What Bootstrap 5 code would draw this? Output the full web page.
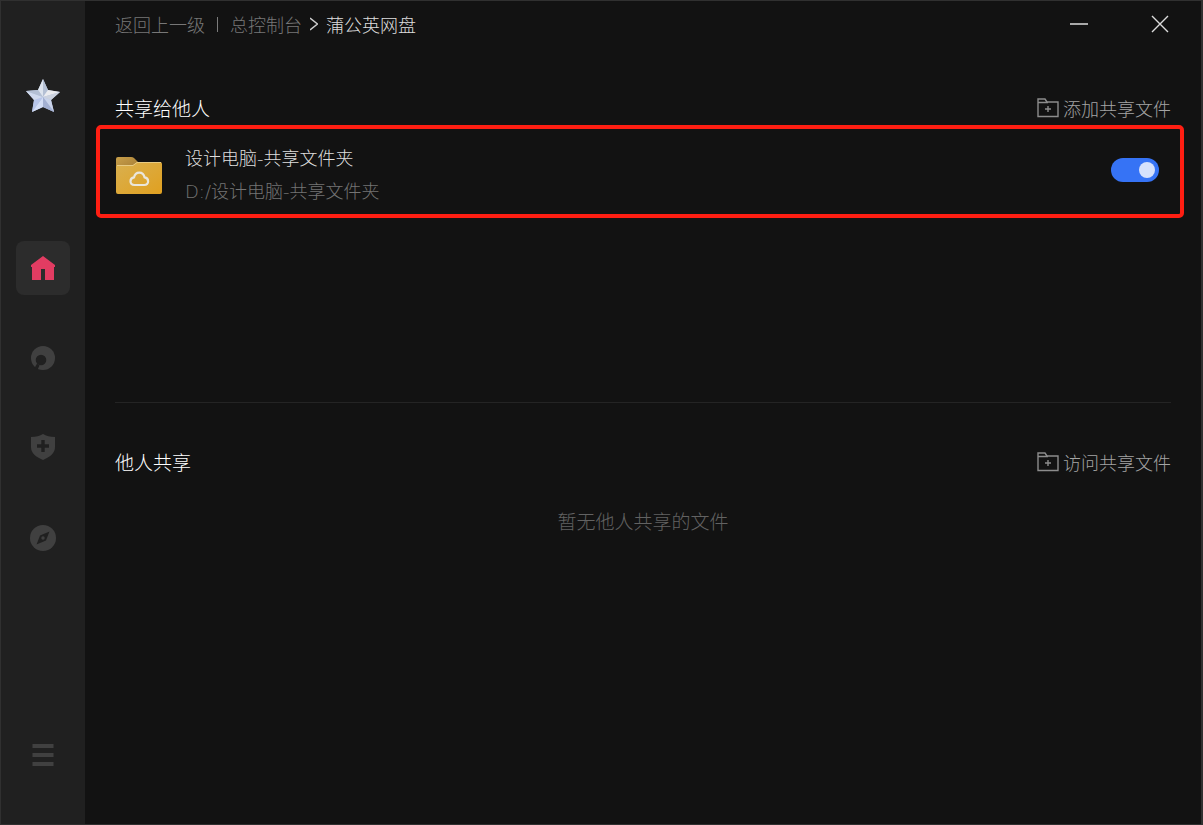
<!DOCTYPE html>
<html lang="zh-CN" data-bs-theme="dark">
<head>
<meta charset="utf-8">
<meta name="viewport" content="width=device-width, initial-scale=1">
<title>蒲公英网盘</title>
<link href="https://cdn.jsdelivr.net/npm/bootstrap@5.3.0/dist/css/bootstrap.min.css" rel="stylesheet">
<style>
body{background:#121212;color:#dedede;font-family:"Noto Sans CJK SC",sans-serif;font-weight:300;font-size:18px;line-height:26px}
.app-window{border:1px solid #303030;border-right-width:2px}
.side-rail{width:84px;background:#202020;padding:68px 0 42px}
.rail-links{gap:36px;margin-top:118px}
.rail-tile{width:54px;height:54px;border-radius:8px;color:#404040;background:none;border:0;padding:0}
.rail-tile.active{background:#2c2c2c;color:#e23c62}
.title-bar{height:46px;padding:0 30px;margin-bottom:44px}
.crumbs a{color:#777}
.crumb-rule{width:1px;height:15px;background:#7b7b7b;margin:0 12px}
.win-btns{gap:63px;margin-right:2px}
.win-btns button{background:none;border:0;padding:0;color:#dcdcdc;width:18px;height:20px}
.section-head{height:34px;padding:0 30px}
.section-head h2{font-size:19px;line-height:26px;font-weight:300;margin:0}
.head-btn{background:none;border:0;padding:0;gap:4px;color:#a4a4a4;font-weight:300}
.head-btn svg{color:#8c8c8c}
.share-list{min-height:277px}
.share-row{margin:0 17px 0 11px;border:4px solid #ff1e12;border-radius:5px;padding:13px 21px 6px 16px}
.share-folder{margin-top:14px}
.share-text{margin-left:23px;font-family:"DejaVu Sans","Noto Sans CJK SC",sans-serif}
.share-text label,.share-path{line-height:33px}
.share-path{color:#747474}
.share-switch .form-check-input{width:48px;height:24px;margin:0;border:0;background-color:#3673f5;background-size:24px 24px;
--bs-form-switch-bg:url("data:image/svg+xml,%3csvg xmlns='http://www.w3.org/2000/svg' viewBox='0 0 24 24'%3e%3ccircle cx='12' cy='12' r='8' fill='%23d6e1fc'/%3e%3c/svg%3e")!important}
.share-switch .form-check-input:not(:checked){background-color:#444}
.section-rule{height:1px;margin:0 30px 42px;border:0;background:#242424;opacity:1}
.empty-note{font-size:19px;color:#626262;margin:29px 0 0}
</style>
</head>
<body>
<div class="app-window d-flex min-vh-100">
  <nav class="side-rail d-flex flex-column align-items-center flex-shrink-0" aria-label="主导航">
    <a href="#" class="rail-tile d-flex align-items-center justify-content-center" aria-label="会员">
      <svg width="36" height="36" viewBox="0 0 36 36">
        <defs><linearGradient id="sg" x1="0" y1="0" x2="1" y2="1"><stop offset="0" stop-color="#c3cee0"/><stop offset="1" stop-color="#aebbdc"/></linearGradient></defs>
        <path d="M18 1l5 11 12 2-9 8 3 12-11-5-11 5 2-12-8-9 12-1z" fill="url(#sg)"/>
        <path d="M18 1v18l5-7z" fill="#b4c0d4"/><path d="M18 1v18l-5-7z" fill="#dde4ee"/>
        <path d="M35 14L18 19l5-7z" fill="#ebecef"/><path d="M35 14L18 19l8 3z" fill="#cbd2df"/>
        <path d="M29 34L18 19l8 3z" fill="#c9d3ea"/><path d="M29 34L18 19v10z" fill="#a3b0d2"/>
        <path d="M7 34l11-15v10z" fill="#d3ddf5"/><path d="M7 34l11-15-9 3z" fill="#b8c6ea"/>
        <path d="M1 13l17 6-9 3z" fill="#d0daee"/><path d="M1 13l17 6-5-7z" fill="#b4c0d4"/>
      </svg>
    </a>
    <div class="rail-links d-flex flex-column">
      <a href="#" class="rail-tile active d-flex align-items-center justify-content-center" aria-label="首页">
        <svg width="26" height="26" viewBox="0 0 26 26" fill="currentColor"><path d="M13 1L25 10v2h-1v13h-9V14h-4v11H2V12H1v-2z"/></svg>
      </a>
      <a href="#" class="rail-tile d-flex align-items-center justify-content-center" aria-label="远程">
        <svg width="26" height="26" viewBox="0 0 26 26"><circle cx="13" cy="13" r="12" fill="currentColor"/><circle cx="11" cy="15" r="5.3" fill="#202020"/><path d="M7 18.500L9.500 20.500L7.500 25L4.500 23z" fill="#202020"/></svg>
      </a>
      <a href="#" class="rail-tile d-flex align-items-center justify-content-center" aria-label="安全">
        <svg width="26" height="28" viewBox="0 0 26 28"><path d="M13 0c3 2 7 3 12 3v10c0 6-5 10-12 13C6 23 1 19 1 13V3c5 0 9-1 12-3z" fill="currentColor"/><path d="M13 6v12M7 12h12" stroke="#202020" stroke-width="3.400"/></svg>
      </a>
      <a href="#" class="rail-tile d-flex align-items-center justify-content-center" aria-label="发现">
        <svg width="26" height="26" viewBox="0 0 26 26"><circle cx="13" cy="13" r="13" fill="currentColor"/><path d="M19.500 6.500L16 15.500 6.500 19.500 10 10.500z" fill="#202020"/><circle cx="13" cy="13" r="1.700" fill="currentColor"/></svg>
      </a>
    </div>
    <button type="button" class="rail-tile mt-auto d-flex align-items-center justify-content-center" aria-label="菜单">
      <svg width="22" height="24" viewBox="0 0 22 24" fill="currentColor"><path d="M0.500 1h21v4H0.500zM0.500 10h21v4H0.500zM0.500 19h21v4H0.500z"/></svg>
    </button>
  </nav>

  <main class="flex-grow-1">
    <header class="title-bar d-flex align-items-center justify-content-between">
      <nav class="crumbs d-flex align-items-center" aria-label="路径">
        <a href="#" class="text-decoration-none">返回上一级</a>
        <span class="crumb-rule"></span>
        <a href="#" class="text-decoration-none">总控制台</a>
        <svg class="mx-2" width="8" height="14" viewBox="0 0 8 14" fill="none" stroke="#cfcfcf" stroke-width="1.500"><path d="M0 1l7.500 6L0 13"/></svg>
        <span aria-current="page">蒲公英网盘</span>
      </nav>
      <div class="win-btns d-flex">
        <button type="button" class="d-flex align-items-center" aria-label="最小化"><svg width="18" height="18" viewBox="0 0 18 18"><path d="M0 9h18" stroke="currentColor" stroke-width="1.500"/></svg></button>
        <button type="button" class="d-flex align-items-center" aria-label="关闭"><svg width="18" height="18" viewBox="0 0 18 18"><path d="M1 1l16 16M17 1L1 17" stroke="currentColor" stroke-width="1.400"/></svg></button>
      </div>
    </header>

    <section>
      <div class="section-head d-flex align-items-center justify-content-between">
        <h2>共享给他人</h2>
        <button type="button" class="head-btn d-flex align-items-center">
          <svg width="22" height="20" viewBox="0 0 22 20" fill="none" stroke="currentColor" stroke-width="1.400"><path d="M1 4.500V1h7l2 3h11v14.500H1zM1 4.500h10M11 8v6M8 11h6"/></svg>
          添加共享文件</button>
      </div>
      <div class="share-list">
        <div class="share-row d-flex">
          <svg class="share-folder flex-shrink-0" width="46" height="38" viewBox="0 0 46 38">
            <defs><linearGradient id="fg" x1="0" y1="0" x2="1" y2="1"><stop offset="0" stop-color="#d9b050"/><stop offset="1" stop-color="#e0a020"/></linearGradient>
            <linearGradient id="fb" x1="0" y1="0" x2="1" y2="1"><stop offset="0" stop-color="#c9a04a"/><stop offset="1" stop-color="#a37a34"/></linearGradient></defs>
            <path d="M0 3a2 2 0 012-2h13q2 0 3 1l4 4v8H0z" fill="url(#fb)"/>
            <path d="M0 11a2 2 0 012-2h15l4-3h23a2 2 0 012 2v28a2 2 0 01-2 2H2a2 2 0 01-2-2z" fill="url(#fg)"/>
            <path d="M1 9.500h16l4-3h24" fill="none" stroke="#e8cb83"/>
            <path d="M18.500 29c-2.500 0-4-1.700-4-3.700 0-2.100 1.600-3.600 3.500-3.900.6-2.800 2.600-4.700 5.300-4.700s4.700 1.900 5.300 4.700c1.900.3 3.500 1.800 3.500 3.900 0 2-1.500 3.700-4 3.700z" fill="none" stroke="#eae6dc" stroke-width="2.200"/>
          </svg>
          <div class="share-text d-flex flex-column">
            <label for="share-on">设计电脑-共享文件夹</label>
            <span class="share-path">D:/设计电脑-共享文件夹</span>
          </div>
          <div class="share-switch form-check form-switch ms-auto p-0 m-0 pt-3">
            <input class="form-check-input" type="checkbox" role="switch" id="share-on" checked>
          </div>
        </div>
      </div>
    </section>
    <hr class="section-rule">
    <section>
      <div class="section-head d-flex align-items-center justify-content-between">
        <h2>他人共享</h2>
        <button type="button" class="head-btn d-flex align-items-center">
          <svg width="22" height="20" viewBox="0 0 22 20" fill="none" stroke="currentColor" stroke-width="1.400"><path d="M1 4.500V1h7l2 3h11v14.500H1zM1 4.500h10M11 8v6M8 11h6"/></svg>
          访问共享文件</button>
      </div>
      <p class="empty-note text-center">暂无他人共享的文件</p>
    </section>
  </main>
</div>
<script src="https://cdn.jsdelivr.net/npm/bootstrap@5.3.0/dist/js/bootstrap.bundle.min.js"></script>
</body>
</html>
